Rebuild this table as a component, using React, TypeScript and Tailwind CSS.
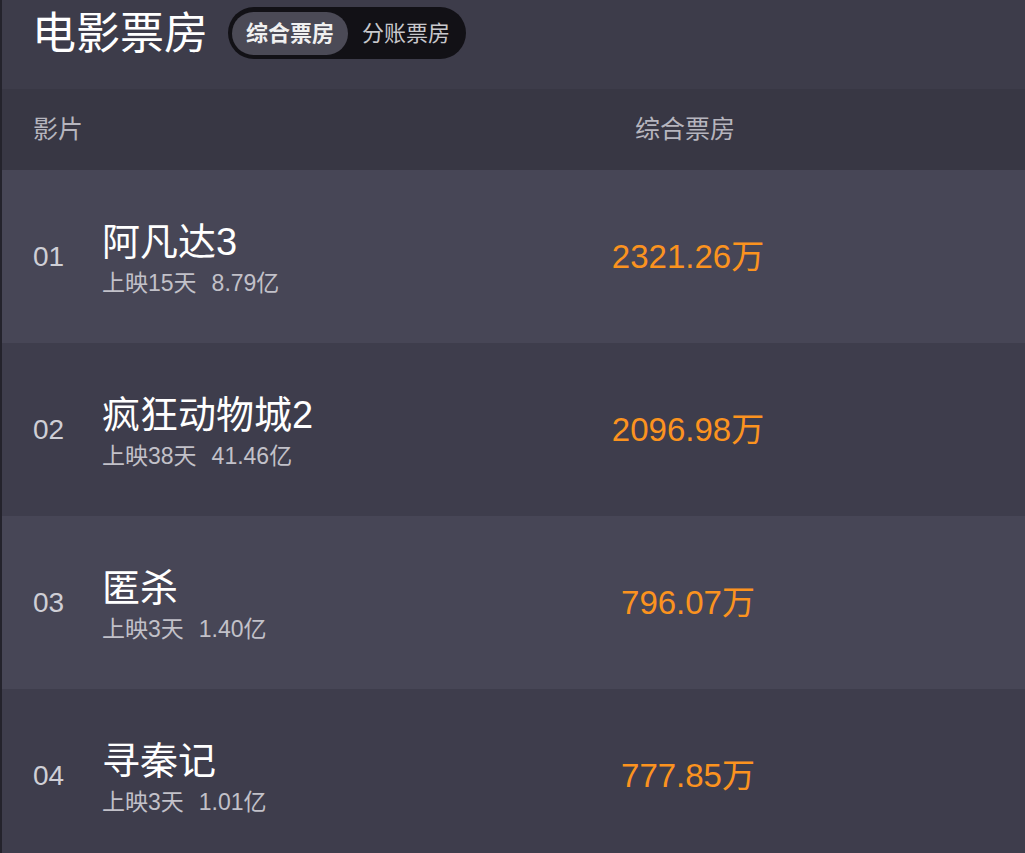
const font = { fontFamily: '"Liberation Sans", "Noto Sans CJK SC", sans-serif' }

const movies = [
  { rank: '01', name: '阿凡达3', days: '上映15天', total: '8.79亿', box: '2321.26万' },
  { rank: '02', name: '疯狂动物城2', days: '上映38天', total: '41.46亿', box: '2096.98万' },
  { rank: '03', name: '匿杀', days: '上映3天', total: '1.40亿', box: '796.07万' },
  { rank: '04', name: '寻秦记', days: '上映3天', total: '1.01亿', box: '777.85万' },
]

export default function App() {
  return (
    <div className="flex h-[853px] w-[1025px] overflow-hidden bg-[#3d3c4a]" style={font}>
      <div className="w-[2px] shrink-0 bg-[#24232c]" />
      <div className="flex min-w-0 flex-1 flex-col">
        <header className="flex h-[89px] shrink-0 items-start gap-[20px] pl-[30px] pt-[7px]">
          <h1 className="mt-[2px] text-[44px] leading-[50px] text-white">电影票房</h1>
          <div className="flex h-[52px] items-center rounded-full bg-[#121116] p-[4px] pr-[16px]">
            <span className="flex h-[43px] w-[116px] items-center justify-center rounded-full bg-[#4b4a56] text-[22px] font-bold text-[#f0f0f0]">
              综合票房
            </span>
            <span className="ml-[14px] text-[22px] text-[#c8c8cc]">分账票房</span>
          </div>
        </header>

        <div className="flex h-[81px] shrink-0 items-center bg-[#383744] pl-[31px] text-[25px] text-[#b6b5be]">
          <span className="flex-1">影片</span>
          <span className="mr-[285px] w-[110px] text-center">综合票房</span>
        </div>

        {movies.map((m, i) => (
          <div
            key={m.rank}
            className={`flex h-[173px] shrink-0 items-center pl-[31px] ${i % 2 === 0 ? 'bg-[#474656]' : 'bg-[#3e3d4c]'}`}
          >
            <span className="w-[69px] text-[28px] text-[#cfcfd6]">{m.rank}</span>
            <div className="flex flex-1 flex-col pt-[4px]">
              <span className="text-[38px] leading-[42px] text-white">{m.name}</span>
              <span className="mt-[6px] text-[23px] leading-[28px] text-[#c2c1c9]">
                {m.days}
                <span className="ml-[15px]">{m.total}</span>
              </span>
            </div>
            <span className="mr-[182px] w-[310px] text-center text-[33px] text-[#fb931f]">{m.box}</span>
          </div>
        ))}
      </div>
    </div>
  )
}
